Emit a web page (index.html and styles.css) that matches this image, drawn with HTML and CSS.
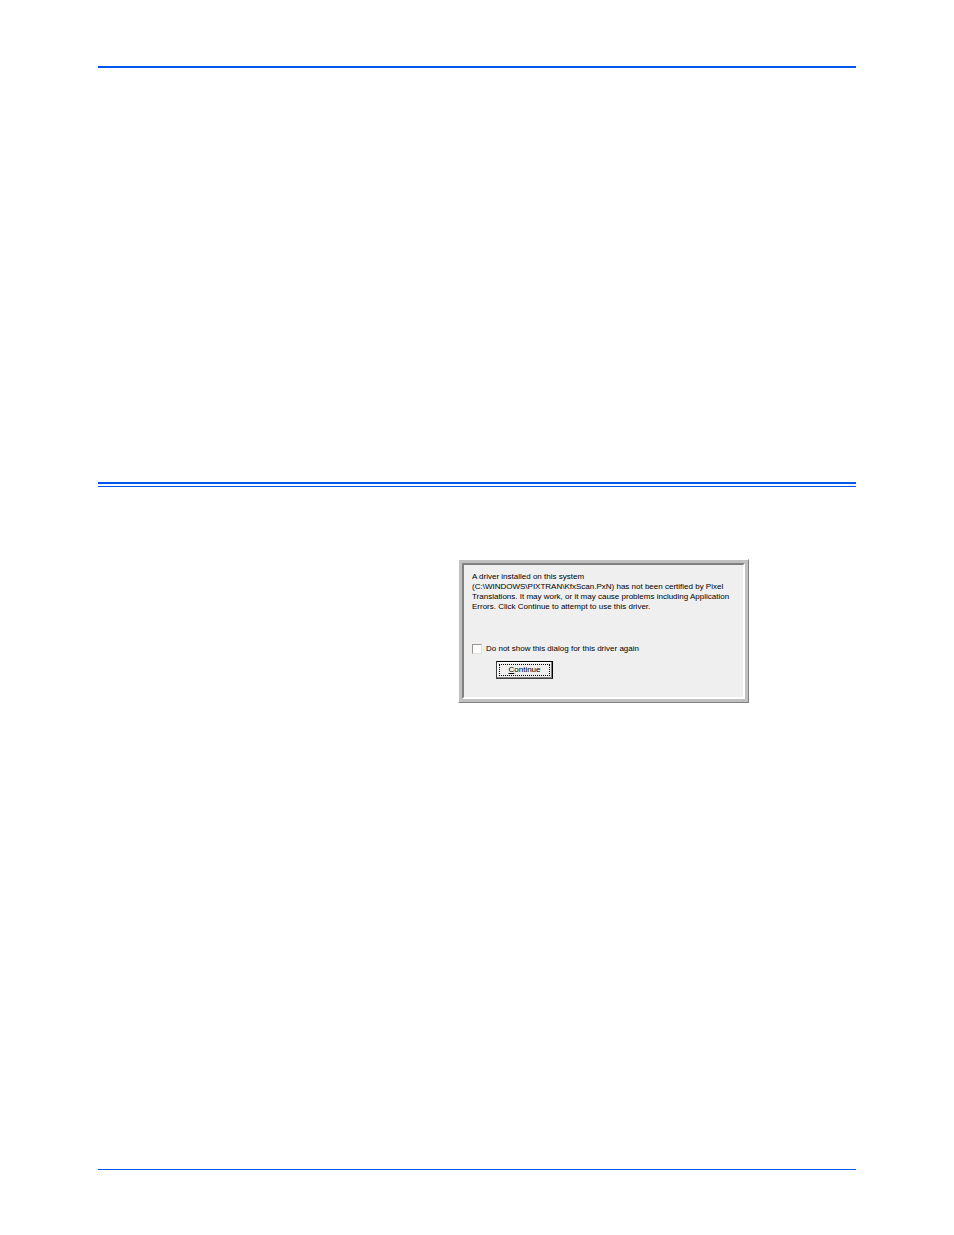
FILE: index.html
```
<!DOCTYPE html>
<html lang="en">
<head>
    <meta charset="UTF-8">
    <meta name="viewport" content="width=device-width, initial-scale=1.0">
    <title>Driver message</title>
    <link rel="stylesheet" href="styles.css">
</head>
<body>
    <div class="page">
        <header class="page-header"></header>
        <main class="section">
            <form class="dialog" role="dialog" aria-label="Driver message">
                <div class="dialog-body">
                    <p class="message">A driver installed on this system<br>
                    (C:\WINDOWS\PIXTRAN\KfxScan.PxN) has not been certified by Pixel<br>
                    Translations. It may work, or it may cause problems including Application<br>
                    Errors. Click Continue to attempt to use this driver.</p>
                    <div class="option">
                        <input type="checkbox" id="hideDialog">
                        <label for="hideDialog">Do not show this dialog for this driver again</label>
                    </div>
                    <button type="button" class="continue-btn"><span><u>C</u>ontinue</span></button>
                </div>
            </form>
        </main>
        <footer class="page-footer"></footer>
    </div>
</body>
</html>
```
FILE: styles.css
```
* {
    box-sizing: border-box;
}
body {
    margin: 0;
    background: #fff;
    color: #000;
    font-family: "Liberation Sans", Arial, sans-serif;
    font-size: 8px;
    line-height: 10px;
}
.page {
    display: flex;
    flex-direction: column;
    min-height: 100vh;
    padding: 66px 98px 65px;
}
.page-header {
    height: 416px;
    border-top: 2px solid #0058f0;
}
/* thick line with a thin one below it */
.section {
    flex: 1;
    padding-top: 75px;
    padding-left: 360px;
    border-top: 2px solid #0058f0;
    position: relative;
}
.section::before {
    content: "";
    position: absolute;
    top: 2px;
    left: 0;
    right: 0;
    height: 1px;
    background: #0058f0;
}
.page-footer {
    border-top: 1px solid #0058f0;
}
.dialog {
    max-width: 291px;
    padding: 3px;
    background: #c0c0c0;
    border: 1px solid;
    border-color: #fff #808080 #808080 #fff;
}
.dialog-body {
    padding: 7px 8px 18px;
    background: #efefef;
    border: 2px solid;
    border-color: #808080 #fff #fff #808080;
}
.message {
    margin: 0 0 32px;
    white-space: nowrap;
}
.option {
    display: flex;
    align-items: center;
    gap: 4px;
    margin-bottom: 7px;
}
.option input {
    appearance: none;
    width: 10px;
    height: 10px;
    margin: 0;
    background: #fff;
    border: 1px solid;
    border-color: #9a948c #e4e0d8 #e4e0d8 #9a948c;
}
.option input:checked {
    background: #404040;
}
.continue-btn {
    display: block;
    width: 57px;
    height: 18px;
    margin-left: 24px;
    padding: 2px;
    background: #efefef;
    border: 1px solid;
    border-color: #000 #000 #404040 #404040;
    box-shadow: inset -1px -1px #808080, inset 1px 1px #fff;
    color: #000;
    font: inherit;
}
.continue-btn span {
    display: block;
    height: 12px;
    border: 1px dotted #000;
    line-height: 10px;
}
```
